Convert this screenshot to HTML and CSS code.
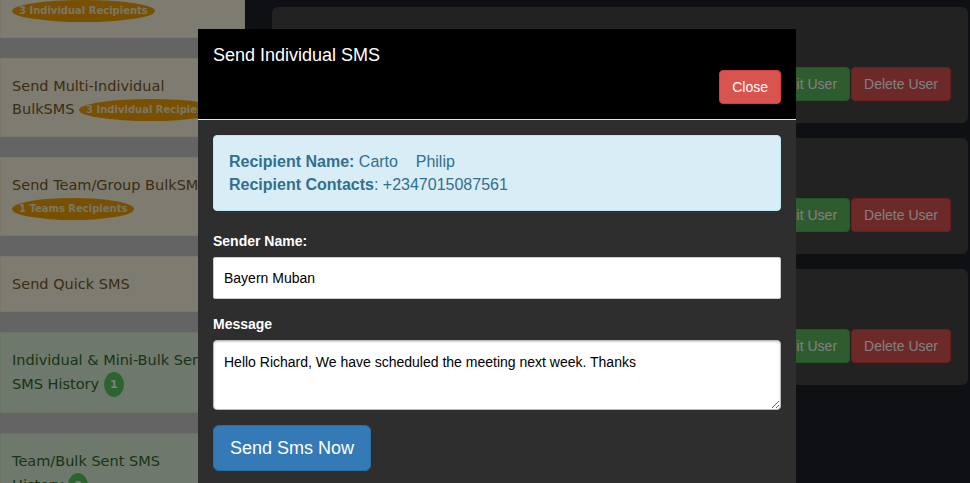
FILE: index.html
```html
<!DOCTYPE html>
<html lang="en">
  <head>
    <meta charset="UTF-8" />
    <meta name="viewport" content="width=device-width, initial-scale=1.0" />
    <title>Users</title>
    <link rel="stylesheet" href="styles.css">
  </head>
  <body>
    <div class="page">
      <aside class="sidebar">
        <a class="side-item warn" href="#">Send Individual SMS <span class="pill">3 Individual Recipients</span></a>
        <a class="side-item warn" href="#">Send Multi-Individual<br>BulkSMS <span class="pill">3 Individual Recipients</span></a>
        <a class="side-item warn" href="#">Send Team/Group BulkSMS<br><span class="pill">1 Teams Recipients</span></a>
        <a class="side-item warn" href="#">Send Quick SMS</a>
        <a class="side-item ok" href="#">Individual &amp; Mini-Bulk Sent<br>SMS History <span class="count">1</span></a>
        <a class="side-item ok" href="#">Team/Bulk Sent SMS<br>History <span class="count">2</span></a>
      </aside>

      <main class="users">
        <div class="user-card">
          <button class="btn btn-success">Edit User</button>
          <button class="btn btn-danger">Delete User</button>
        </div>
        <div class="user-card">
          <button class="btn btn-success">Edit User</button>
          <button class="btn btn-danger">Delete User</button>
        </div>
        <div class="user-card">
          <button class="btn btn-success">Edit User</button>
          <button class="btn btn-danger">Delete User</button>
        </div>
      </main>
    </div>

    <div class="backdrop"></div>

    <div class="modal">
      <div class="modal-header">
        <h4 class="modal-title">Send Individual SMS</h4>
        <div class="header-actions">
          <button class="btn btn-danger">Close</button>
        </div>
      </div>
      <div class="modal-body">
        <div class="alert">
          <b>Recipient Name:</b> Carto&nbsp;&nbsp;&nbsp; Philip<br>
          <b>Recipient Contacts</b>: +2347015087561
        </div>
        <div class="form-group">
          <label for="sender">Sender Name:</label>
          <input id="sender" class="form-control" type="text" value="Bayern Muban">
        </div>
        <div class="form-group">
          <label for="message">Message</label>
          <textarea id="message" class="form-control message">Hello Richard, We have scheduled the meeting next week. Thanks</textarea>
        </div>
        <button class="btn btn-primary btn-lg">Send Sms Now</button>
      </div>
    </div>
  </body>
</html>
```

FILE: styles.css
```css
* {
  margin: 0;
  padding: 0;
  box-sizing: border-box;
}

body {
  font-family: "Liberation Sans", Arial, sans-serif;
  height: 483px;
  overflow: hidden;
  background-color: #1e2028;
}

.page {
  display: flex;
  height: 100%;
}

/* left menu */
.sidebar {
  width: 245px;
  flex-shrink: 0;
  background-color: #c8c8c8;
  margin-top: -41px;
  display: flex;
  flex-direction: column;
  gap: 20px;
  font-family: "DejaVu Sans", sans-serif;
  font-size: 14.5px;
  line-height: 23px;
}

.side-item {
  display: block;
  padding: 16px 11px 15px;
  border: 1px solid;
  text-decoration: none;
}

.side-item.warn {
  background-color: #fcf8e3;
  border-color: #faebcc;
  color: #7a5a26;
}

.side-item.ok {
  background-color: #dff0d8;
  border-color: #d6e9c6;
  color: #2f6a30;
}

.pill {
  display: inline-block;
  height: 22px;
  line-height: 22px;
  padding: 0 7px;
  border-radius: 50%;
  background-color: #f0a000;
  color: #f4ead0;
  font-size: 10px;
  font-weight: bold;
  vertical-align: middle;
}

.count {
  display: inline-block;
  width: 20px;
  height: 25px;
  line-height: 25px;
  border-radius: 50%;
  background-color: #58c860;
  color: #fff;
  font-size: 11px;
  font-weight: bold;
  text-align: center;
  vertical-align: middle;
}

/* user list */
.users {
  flex: 1;
  padding: 7px 2px 0 27px;
  display: flex;
  flex-direction: column;
  gap: 15px;
}

.user-card {
  height: 116px;
  background-color: #444;
  border-radius: 6px;
  display: flex;
  justify-content: flex-end;
  align-items: flex-start;
  gap: 1px;
  padding: 60px 17px 0 0;
}

.btn {
  font-family: "Liberation Sans", Arial, sans-serif;
  font-size: 14px;
  line-height: 20px;
  padding: 6px 12px;
  border: 1px solid transparent;
  border-radius: 4px;
  color: #fff;
  cursor: pointer;
}

.btn-success {
  background-color: #5cb85c;
  border-color: #4cae4c;
}

.btn-danger {
  background-color: #d9534f;
  border-color: #d43f3a;
}

.btn-primary {
  background-color: #337ab7;
  border-color: #2e6da4;
}

.btn-lg {
  font-size: 18px;
  line-height: 24px;
  padding: 10px 16px;
  border-radius: 6px;
}

/* modal */
.backdrop {
  position: fixed;
  top: 0;
  left: 0;
  right: 0;
  bottom: 0;
  background-color: rgba(0, 0, 0, 0.5);
  z-index: 10;
}

.modal {
  position: fixed;
  top: 29px;
  left: 198px;
  width: 598px;
  height: 480px;
  background-color: #2e2e2e;
  z-index: 20;
}

.modal-header {
  background-color: #000;
  padding: 16px 15px 15px;
  border-bottom: 1px solid #e5e5e5;
}

.modal-title {
  color: #fff;
  font-size: 18px;
  line-height: 20px;
  font-weight: normal;
}

.header-actions {
  display: flex;
  justify-content: flex-end;
  margin-top: 5px;
}

.modal-body {
  padding: 15px;
}

.alert {
  background-color: #d9edf7;
  border: 1px solid #bce8f1;
  border-radius: 4px;
  color: #31708f;
  padding: 14px 15px;
  font-size: 16px;
  line-height: 23px;
  margin-bottom: 20px;
}

.form-group {
  margin-bottom: 15px;
}

.form-group label {
  display: block;
  color: #fff;
  font-size: 14px;
  font-weight: bold;
  line-height: 20px;
  margin-bottom: 6px;
}

.form-control {
  display: block;
  width: 100%;
  height: 42px;
  padding: 10px;
  font-family: "Liberation Sans", Arial, sans-serif;
  font-size: 14px;
  color: #000;
  background-color: #fff;
  border: 1px solid #ccc;
  border-radius: 2px;
}

.form-control.message {
  height: 70px;
  padding-top: 13px;
  border-color: #bbb;
  border-radius: 4px;
  box-shadow: inset 0 1px 2px rgba(0, 0, 0, 0.2);
  resize: vertical;
}
```
